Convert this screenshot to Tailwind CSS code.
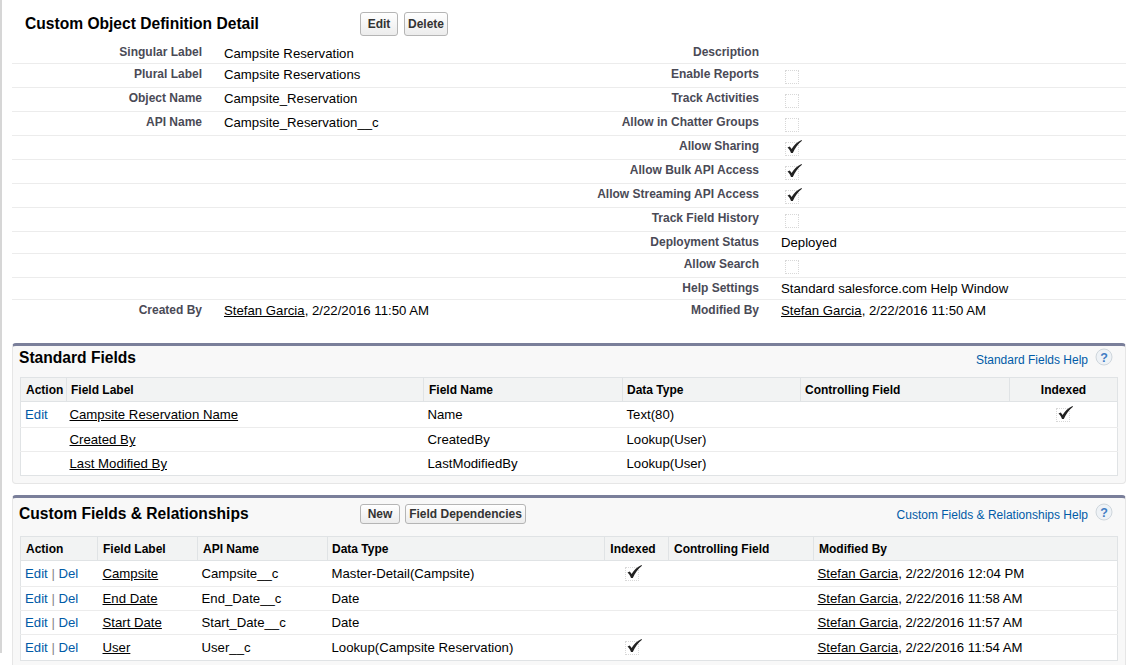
<!DOCTYPE html>
<html lang="en">
<head>
  <meta charset="UTF-8" />
  <title>Custom Object Definition Detail</title>
  <script src="https://cdn.jsdelivr.net/npm/@tailwindcss/browser@4"></script>
</head>
<body class="bg-white h-[665px] overflow-hidden font-['Liberation_Sans',Arial,sans-serif] text-[13.2px] text-black">
  <div class="h-[653px] border-l-2 border-[#d6d6d6] pl-[10px] pr-[3px]">
    <!-- detail header -->
    <div class="h-[41px] pt-[7px] flex items-center">
      <h1 class="ml-[13px] w-[335px] text-[15.6px] font-bold">Custom Object Definition Detail</h1>
      <button class="w-[38px] h-[24px] border border-[#b5b5b5] rounded-[3px] bg-linear-to-b from-white to-[#ececec] text-[12px] font-bold text-[#333]">Edit</button>
      <button class="ml-[6px] w-[44px] h-[24px] border border-[#b5b5b5] rounded-[3px] bg-linear-to-b from-white to-[#ececec] text-[12px] font-bold text-[#333]">Delete</button>
    </div>

    <!-- detail rows -->
    <div>
      <div class="h-[23px] border-b border-[#ececec] flex"><div class="w-[190px] text-right text-[12px] font-bold text-[#4a4a56] pt-[2px]">Singular Label</div><div class="w-[367px] pl-[22px] pt-[3px]">Campsite Reservation</div><div class="w-[190px] text-right text-[12px] font-bold text-[#4a4a56] pt-[2px]">Description</div></div>
      <div class="h-[24px] border-b border-[#ececec] flex"><div class="w-[190px] text-right text-[12px] font-bold text-[#4a4a56] pt-[1px]">Plural Label</div><div class="w-[367px] pl-[22px] pt-[1px]">Campsite Reservations</div><div class="w-[190px] text-right text-[12px] font-bold text-[#4a4a56] pt-[1px]">Enable Reports</div><div class="pl-[26px] pt-[6px]"><div class="size-[14px] border border-dotted border-[#d8d8d8]"></div></div></div>
      <div class="h-[24px] border-b border-[#ececec] flex"><div class="w-[190px] text-right text-[12px] font-bold text-[#4a4a56] pt-[1px]">Object Name</div><div class="w-[367px] pl-[22px] pt-[1px]">Campsite_Reservation</div><div class="w-[190px] text-right text-[12px] font-bold text-[#4a4a56] pt-[1px]">Track Activities</div><div class="pl-[26px] pt-[6px]"><div class="size-[14px] border border-dotted border-[#d8d8d8]"></div></div></div>
      <div class="h-[24px] border-b border-[#ececec] flex"><div class="w-[190px] text-right text-[12px] font-bold text-[#4a4a56] pt-[1px]">API Name</div><div class="w-[367px] pl-[22px] pt-[1px]">Campsite_Reservation__c</div><div class="w-[190px] text-right text-[12px] font-bold text-[#4a4a56] pt-[1px]">Allow in Chatter Groups</div><div class="pl-[26px] pt-[6px]"><div class="size-[14px] border border-dotted border-[#d8d8d8]"></div></div></div>
      <div class="h-[24px] border-b border-[#ececec] flex"><div class="w-[557px]"></div><div class="w-[190px] text-right text-[12px] font-bold text-[#4a4a56] pt-[1px]">Allow Sharing</div><div class="pl-[26px] pt-[6px]"><div class="size-[14px] border border-dotted border-[#d8d8d8] relative"><svg class="absolute -top-[4px] left-0" width="17" height="16" viewBox="0 0 17 16"><path d="M1.5 8.5 L3.8 7.4 L5.6 10 C8 6 11 3 15.5 1 L16 1.7 C12 5 9 9 6.8 14 L5 14 C4.3 12 3.2 10 1.5 8.5 Z" fill="#222"/></svg></div></div></div>
      <div class="h-[24px] border-b border-[#ececec] flex"><div class="w-[557px]"></div><div class="w-[190px] text-right text-[12px] font-bold text-[#4a4a56] pt-[1px]">Allow Bulk API Access</div><div class="pl-[26px] pt-[6px]"><div class="size-[14px] border border-dotted border-[#d8d8d8] relative"><svg class="absolute -top-[4px] left-0" width="17" height="16" viewBox="0 0 17 16"><path d="M1.5 8.5 L3.8 7.4 L5.6 10 C8 6 11 3 15.5 1 L16 1.7 C12 5 9 9 6.8 14 L5 14 C4.3 12 3.2 10 1.5 8.5 Z" fill="#222"/></svg></div></div></div>
      <div class="h-[24px] border-b border-[#ececec] flex"><div class="w-[557px]"></div><div class="w-[190px] text-right text-[12px] font-bold text-[#4a4a56] pt-[1px]">Allow Streaming API Access</div><div class="pl-[26px] pt-[6px]"><div class="size-[14px] border border-dotted border-[#d8d8d8] relative"><svg class="absolute -top-[4px] left-0" width="17" height="16" viewBox="0 0 17 16"><path d="M1.5 8.5 L3.8 7.4 L5.6 10 C8 6 11 3 15.5 1 L16 1.7 C12 5 9 9 6.8 14 L5 14 C4.3 12 3.2 10 1.5 8.5 Z" fill="#222"/></svg></div></div></div>
      <div class="h-[24px] border-b border-[#ececec] flex"><div class="w-[557px]"></div><div class="w-[190px] text-right text-[12px] font-bold text-[#4a4a56] pt-[1px]">Track Field History</div><div class="pl-[26px] pt-[6px]"><div class="size-[14px] border border-dotted border-[#d8d8d8]"></div></div></div>
      <div class="h-[22px] border-b border-[#ececec] flex"><div class="w-[557px]"></div><div class="w-[190px] text-right text-[12px] font-bold text-[#4a4a56] pt-[1px]">Deployment Status</div><div class="pl-[22px] pt-[1px]">Deployed</div></div>
      <div class="h-[24px] border-b border-[#ececec] flex"><div class="w-[557px]"></div><div class="w-[190px] text-right text-[12px] font-bold text-[#4a4a56] pt-[1px]">Allow Search</div><div class="pl-[26px] pt-[6px]"><div class="size-[14px] border border-dotted border-[#d8d8d8]"></div></div></div>
      <div class="h-[22px] border-b border-[#ececec] flex"><div class="w-[557px]"></div><div class="w-[190px] text-right text-[12px] font-bold text-[#4a4a56] pt-[1px]">Help Settings</div><div class="pl-[22px] pt-[1px]">Standard salesforce.com Help Window</div></div>
      <div class="h-[22px] flex"><div class="w-[190px] text-right text-[12px] font-bold text-[#4a4a56] pt-[1px]">Created By</div><div class="w-[367px] pl-[22px] pt-[1px]"><span class="underline">Stefan Garcia</span>, 2/22/2016 11:50 AM</div><div class="w-[190px] text-right text-[12px] font-bold text-[#4a4a56] pt-[1px]">Modified By</div><div class="pl-[22px] pt-[1px]"><span class="underline">Stefan Garcia</span>, 2/22/2016 11:50 AM</div></div>
    </div>

    <!-- standard fields -->
    <div class="mt-[21px] h-[141px] border border-[#e6e6e6] border-t-[3px] border-t-[#7a7f9a] rounded-[4px] bg-[#f8f8f8] px-[7px]">
      <div class="h-[31px] flex">
        <h2 class="ml-[-1px] text-[15.6px] font-bold">Standard Fields</h2>
        <div class="ml-auto mr-[5px] pt-[5px] flex gap-[7px]"><span class="text-[#015ba7] text-[12px]">Standard Fields Help</span><svg width="18" height="18" viewBox="0 0 18 18" class="-mt-[3px]"><circle cx="9" cy="9" r="8" fill="#eef2f6" stroke="#cfd6dc"/><text x="9" y="13.5" text-anchor="middle" font-size="12.5" font-weight="700" fill="#3f7cc4">?</text></svg></div>
      </div>
      <table class="w-[1097px] table-fixed border-collapse bg-white border border-[#e0e3e5]">
        <colgroup><col class="w-[46px]"><col class="w-[357px]"><col class="w-[199px]"><col class="w-[178px]"><col class="w-[209px]"><col class="w-[108px]"></colgroup>
        <thead class="bg-[#f2f3f3] text-[12px] font-bold text-left">
          <tr class="h-[24px] border-b border-[#e0e3e5]">
            <th class="pl-[5px] border-r border-[#e0e3e5]">Action</th><th class="pl-[4px] border-r border-[#e0e3e5]">Field Label</th><th class="pl-[5px] border-r border-[#e0e3e5]">Field Name</th><th class="pl-[4px] border-r border-[#e0e3e5]">Data Type</th><th class="pl-[4px] border-r border-[#e0e3e5]">Controlling Field</th><th class="text-center">Indexed</th>
          </tr>
        </thead>
        <tbody class="[&_td]:pt-[1px]">
          <tr class="h-[26px] border-b border-[#ececec]"><td class="pl-[4px] text-[#015ba7]">Edit</td><td class="pl-[3px] underline">Campsite Reservation Name</td><td class="pl-[4px]">Name</td><td class="pl-[4px]">Text(80)</td><td></td><td><div class="mx-auto size-[14px] border border-dotted border-[#d8d8d8] relative"><svg class="absolute -top-[4px] left-0" width="17" height="16" viewBox="0 0 17 16"><path d="M1.5 8.5 L3.8 7.4 L5.6 10 C8 6 11 3 15.5 1 L16 1.7 C12 5 9 9 6.8 14 L5 14 C4.3 12 3.2 10 1.5 8.5 Z" fill="#222"/></svg></div></td></tr>
          <tr class="h-[24px] border-b border-[#ececec]"><td></td><td class="pl-[3px] underline">Created By</td><td class="pl-[4px]">CreatedBy</td><td class="pl-[4px]">Lookup(User)</td><td></td><td></td></tr>
          <tr class="h-[24px]"><td></td><td class="pl-[3px] underline">Last Modified By</td><td class="pl-[4px]">LastModifiedBy</td><td class="pl-[4px]">Lookup(User)</td><td></td><td></td></tr>
        </tbody>
      </table>
    </div>

    <!-- custom fields -->
    <div class="mt-[11px] h-[180px] border border-[#e6e6e6] border-t-[3px] border-t-[#7a7f9a] rounded-[4px] bg-[#f8f8f8] px-[7px]">
      <div class="h-[38px] flex">
        <h2 class="ml-[-1px] w-[341px] pt-[4px] text-[15.6px] font-bold">Custom Fields &amp; Relationships</h2>
        <div class="pt-[6px] flex gap-[5px]">
          <button class="w-[40px] h-[20px] border border-[#b5b5b5] rounded-[3px] bg-linear-to-b from-white to-[#ececec] text-[12px] font-bold text-[#333]">New</button>
          <button class="w-[121px] h-[20px] border border-[#b5b5b5] rounded-[3px] bg-linear-to-b from-white to-[#ececec] text-[12px] font-bold text-[#333]">Field Dependencies</button>
        </div>
        <div class="ml-auto mr-[5px] pt-[8px] flex gap-[7px]"><span class="text-[#015ba7] text-[12px]">Custom Fields &amp; Relationships Help</span><svg width="18" height="18" viewBox="0 0 18 18" class="-mt-[3px]"><circle cx="9" cy="9" r="8" fill="#eef2f6" stroke="#cfd6dc"/><text x="9" y="13.5" text-anchor="middle" font-size="12.5" font-weight="700" fill="#3f7cc4">?</text></svg></div>
      </div>
      <table class="w-[1097px] table-fixed border-collapse bg-white border border-[#e0e3e5]">
        <colgroup><col class="w-[77px]"><col class="w-[100px]"><col class="w-[130px]"><col class="w-[277px]"><col class="w-[64px]"><col class="w-[145px]"><col class="w-[304px]"></colgroup>
        <thead class="bg-[#f2f3f3] text-[12px] font-bold text-left">
          <tr class="h-[24px] border-b border-[#e0e3e5]">
            <th class="pl-[5px] border-r border-[#e0e3e5]">Action</th><th class="pl-[5px] border-r border-[#e0e3e5]">Field Label</th><th class="pl-[5px] border-r border-[#e0e3e5]">API Name</th><th class="pl-[4px] border-r border-[#e0e3e5]">Data Type</th><th class="text-center pr-[7px] border-r border-[#e0e3e5]">Indexed</th><th class="pl-[5px] border-r border-[#e0e3e5]">Controlling Field</th><th class="pl-[5px]">Modified By</th>
          </tr>
        </thead>
        <tbody class="[&_td]:pt-[1px]">
          <tr class="h-[26px] border-b border-[#ececec]"><td class="pl-[4px] text-[#015ba7]">Edit <span class="text-[#888]">|</span> Del</td><td class="pl-[5px] underline">Campsite</td><td class="pl-[4px]">Campsite__c</td><td class="pl-[4px]">Master-Detail(Campsite)</td><td class="pr-[9px]"><div class="mx-auto size-[14px] border border-dotted border-[#d8d8d8] relative"><svg class="absolute -top-[4px] left-0" width="17" height="16" viewBox="0 0 17 16"><path d="M1.5 8.5 L3.8 7.4 L5.6 10 C8 6 11 3 15.5 1 L16 1.7 C12 5 9 9 6.8 14 L5 14 C4.3 12 3.2 10 1.5 8.5 Z" fill="#222"/></svg></div></td><td></td><td class="pl-[4px]"><span class="underline">Stefan Garcia</span>, 2/22/2016 12:04 PM</td></tr>
          <tr class="h-[24px] border-b border-[#ececec]"><td class="pl-[4px] text-[#015ba7]">Edit <span class="text-[#888]">|</span> Del</td><td class="pl-[5px] underline">End Date</td><td class="pl-[4px]">End_Date__c</td><td class="pl-[4px]">Date</td><td></td><td></td><td class="pl-[4px]"><span class="underline">Stefan Garcia</span>, 2/22/2016 11:58 AM</td></tr>
          <tr class="h-[24px] border-b border-[#ececec]"><td class="pl-[4px] text-[#015ba7]">Edit <span class="text-[#888]">|</span> Del</td><td class="pl-[5px] underline">Start Date</td><td class="pl-[4px]">Start_Date__c</td><td class="pl-[4px]">Date</td><td></td><td></td><td class="pl-[4px]"><span class="underline">Stefan Garcia</span>, 2/22/2016 11:57 AM</td></tr>
          <tr class="h-[26px]"><td class="pl-[4px] text-[#015ba7]">Edit <span class="text-[#888]">|</span> Del</td><td class="pl-[5px] underline">User</td><td class="pl-[4px]">User__c</td><td class="pl-[4px]">Lookup(Campsite Reservation)</td><td class="pr-[9px]"><div class="mx-auto size-[14px] border border-dotted border-[#d8d8d8] relative"><svg class="absolute -top-[4px] left-0" width="17" height="16" viewBox="0 0 17 16"><path d="M1.5 8.5 L3.8 7.4 L5.6 10 C8 6 11 3 15.5 1 L16 1.7 C12 5 9 9 6.8 14 L5 14 C4.3 12 3.2 10 1.5 8.5 Z" fill="#222"/></svg></div></td><td></td><td class="pl-[4px]"><span class="underline">Stefan Garcia</span>, 2/22/2016 11:54 AM</td></tr>
        </tbody>
      </table>
    </div>
  </div>
</body>
</html>
